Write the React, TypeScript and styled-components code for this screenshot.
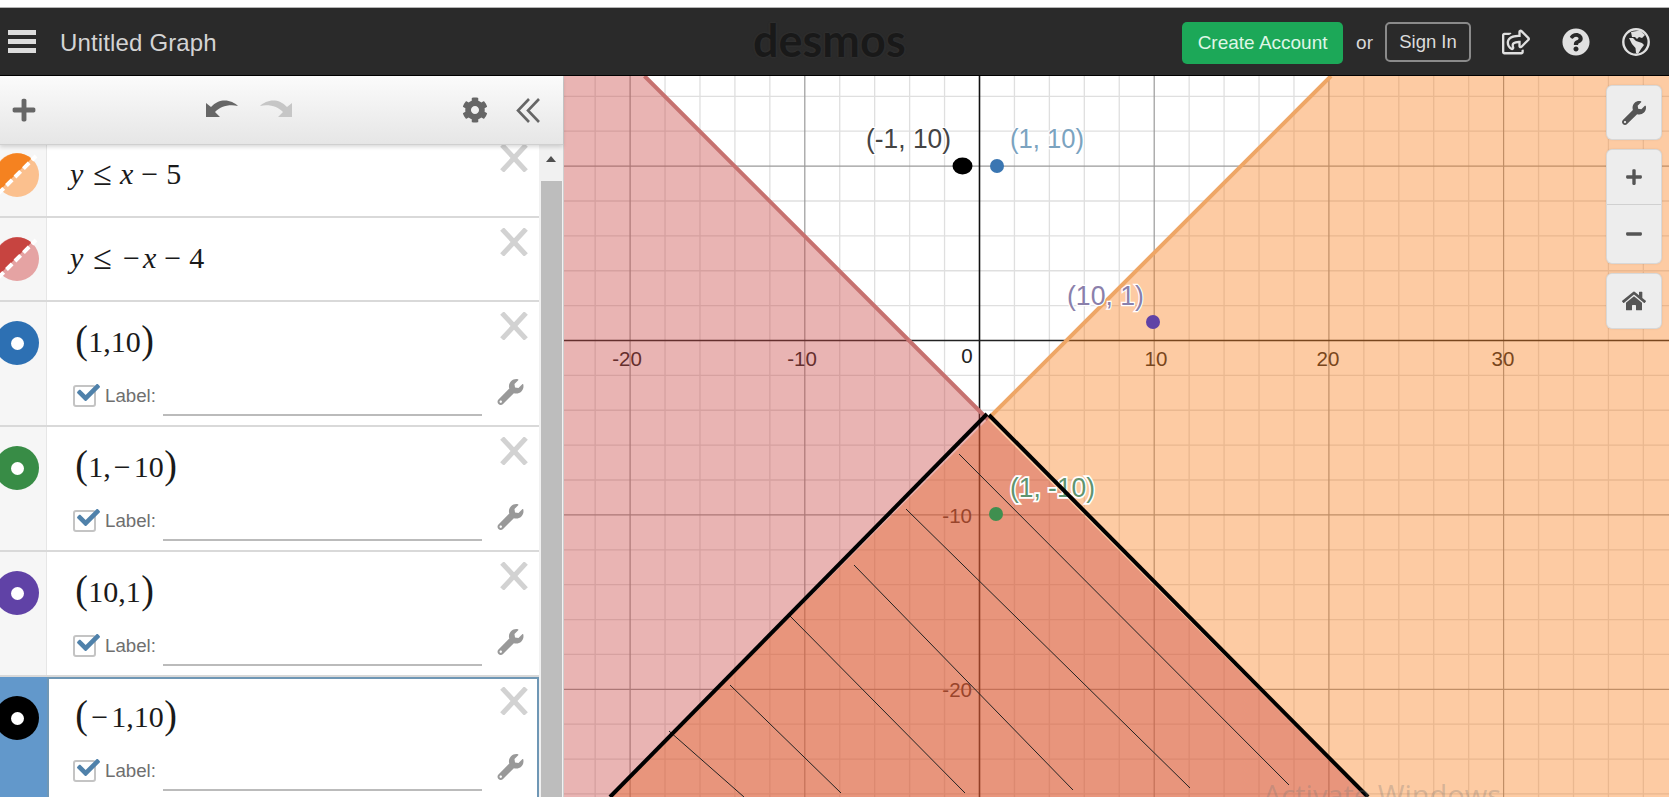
import React from 'react';
import styled, { createGlobalStyle } from 'styled-components';
import { FaWrench, FaPlus, FaMinus, FaHome, FaCog, FaCheck, FaQuestionCircle, FaRegShareSquare } from 'react-icons/fa';

const GlobalStyle = createGlobalStyle`
  html, body { margin: 0; padding: 0; height: 100%; overflow: hidden; background: #fff; }
  #root { height: 100%; }
  * { box-sizing: border-box; }
`;

const Page = styled.div`
  width: 1669px; height: 797px; display: flex; flex-direction: column; overflow: hidden;
  font-family: "Liberation Sans", Arial, sans-serif;
`;
const TopStrip = styled.div`height: 8px; flex: none; background: #fff; border-bottom: 1px solid #b4b4b4;`;
const Header = styled.header`
  height: 68px; flex: none; background: #2a2a2a; border-bottom: 1px solid #000;
  display: grid; grid-template-columns: 753px auto 1fr; align-items: center;
`;
const HeaderLeft = styled.div`display: flex; align-items: center; padding-left: 8px; gap: 25px;`;
const Burger = styled.div`display: flex; flex-direction: column; gap: 4px; width: 28px;`;
const BurgerBar = styled.span`display: block; height: 5px; background: #dcdcdc;`;
const Title = styled.div`font-size: 24px; color: #d4d4d4; letter-spacing: 0.15px; margin: 3px 0 0 -1px;`;
const Logo = styled.div`
  font-family: Lato, sans-serif; font-size: 45px; font-weight: 700; color: #191919; line-height: 1;
  width: 151px; margin-top: -3px; text-shadow: 0 0 2px #3c3c3c;
`;
const HeaderRight = styled.div`display: flex; align-items: center; justify-content: flex-end; padding-right: 19px;`;
const CreateButton = styled.div`
  width: 161px; height: 42px; border-radius: 5px; background: #1ca858; color: #dff6e6;
  font-size: 19px; display: flex; align-items: center; justify-content: center; margin-top: 2px;
`;
const Or = styled.span`font-size: 19px; color: #d8d8d8; margin: 3px 12px 0 13px;`;
const SignIn = styled.div`
  width: 86px; height: 40px; border-radius: 5px; border: 2px solid #8a8a8a; color: #dcdcdc;
  font-size: 18.5px; display: flex; align-items: center; justify-content: center; margin: 1px 31px 0 0;
`;
const HeaderIcon = styled.div<{ $gap?: number }>`
  width: 28px; height: 28px; color: #e0e0e0; margin-left: ${p => p.$gap ?? 0}px; display: flex;
  svg { width: 100%; height: 100%; }
`;

const Main = styled.div`flex: 1; display: flex; min-height: 0;`;
const Sidebar = styled.aside`width: 564px; flex: none; display: flex; flex-direction: column; border-right: 1px solid #cfcfcf; background: #fff;`;
const Toolbar = styled.div`
  height: 69px; flex: none; position: relative; z-index: 2; display: flex; align-items: center; padding-left: 11px;
  background: linear-gradient(#fbfbfb, #e6e6e6); border-bottom: 1px solid #d0d0d0; box-shadow: 0 2px 4px rgba(0,0,0,.15);
  color: #666;
`;
const PlusIcon = styled(FaPlus)`width: 26px; height: 26px;`;
const HistoryGroup = styled.div`display: flex; gap: 22px; margin-left: 169px; margin-top: -5px;`;
const HistoryIcon = styled.svg<{ $redo?: boolean }>`
  width: 32px; height: 18px; fill: ${p => (p.$redo ? '#c6c6c6' : '#666')};
  transform: ${p => (p.$redo ? 'scaleX(-1)' : 'none')};
`;
const ToolsGroup = styled.div`display: flex; align-items: center; gap: 28px; margin-left: auto; padding-right: 23px;`;
const GearIcon = styled(FaCog)`width: 26px; height: 26px;`;
const Chevrons = styled.svg`width: 24px; height: 25px; fill: none; stroke: #666; stroke-width: 2.6;`;

const ListArea = styled.div`flex: 1; display: flex; min-height: 0; overflow: hidden;`;
const List = styled.div`width: 539px; flex: none; margin-top: -11px;`;
const Row = styled.div<{ $height: number }>`
  height: ${p => p.$height}px; display: flex; overflow: hidden; border-bottom: 2px solid #d9d9d9;
`;
const Gutter = styled.div<{ $selected?: boolean }>`
  width: 47px; flex: none; padding-top: 19px; background: ${p => (p.$selected ? '#6298cb' : '#f6f6f6')};
  border-right: 1px solid ${p => (p.$selected ? '#6298cb' : '#e6e6e6')};
`;
const Ring = styled.div<{ $color: string }>`
  width: 44px; height: 44px; margin-left: -5px; border-radius: 50%; background: ${p => p.$color};
  display: flex; align-items: center; justify-content: center;
  &::after { content: ""; width: 13px; height: 13px; border-radius: 50%; background: #fff; }
`;
const HalfIcon = styled.svg`width: 44px; height: 44px; margin-left: -5px; display: block;`;
const RowBody = styled.div<{ $selected?: boolean }>`
  flex: 1; min-width: 0; padding: ${p => (p.$selected ? '8px 9px 0 24px' : '10px 11px 0 26px')};
  border: ${p => (p.$selected ? '2px solid #6f97b5' : '0')};
  border-bottom: 0; background: #fff;
`;
const ExpressionLine = styled.div<{ $height: number }>`
  height: ${p => p.$height}px; display: flex; justify-content: space-between; align-items: flex-start;
`;
const Equation = styled.div`
  font-family: "Liberation Serif", "Times New Roman", serif; font-size: 30px; line-height: 40px; color: #1a1a1a;
  display: flex; align-items: center; margin: 10px 0 0 -3px; white-space: nowrap;
`;
const Point = styled.div`
  font-family: "Liberation Serif", "Times New Roman", serif; font-size: 30px; line-height: 40px; color: #1a1a1a;
  display: flex; align-items: center; margin: 10px 0 0 2px; white-space: nowrap;
`;
const Variable = styled.i``;
const LessEqual = styled.span`font-size: 34px; margin: 0 8px 0 10px; line-height: 40px;`;
const Operator = styled.span`margin: 0 8px;`;
const UnaryMinus = styled.span`margin: 0 3px 0 3px;`;
const Paren = styled.span`font-size: 40px; font-weight: 300; line-height: 40px; margin-top: -4px; transform: scaleX(.95);`;
const CloseIcon = styled.svg`width: 28px; height: 28px; flex: none; stroke: #d2d2d2; stroke-width: 5; fill: none;`;
const LabelRow = styled.div`height: 36px; display: flex; align-items: stretch;`;
const CheckBox = styled.div`
  width: 23px; height: 22px; margin-top: 5px; border: 2px solid #c4c4c4; border-radius: 3px; position: relative; flex: none;
  svg { position: absolute; left: 0; top: -6px; width: 27px; height: 23px; color: #4f81aa; }
`;
const LabelText = styled.span`font-size: 18.7px; color: #6f6f6f; margin-left: 9px; line-height: 32px;`;
const LabelInput = styled.div`flex: none; width: 319px; margin-left: 7px; border-bottom: 2px solid #bbb;`;
const RowWrench = styled(FaWrench)`width: 27px; height: 26px; color: #999; margin: -1px 0 0 15px; flex: none;`;

const Scrollbar = styled.div`width: 24px; flex: none; background: #f1f1f1; display: flex; flex-direction: column; align-items: center;`;
const ScrollUp = styled.div`
  height: 36px; flex: none; display: flex; justify-content: center; padding-top: 11px;
  &::after { content: ""; border-left: 5px solid transparent; border-right: 5px solid transparent; border-bottom: 6px solid #505050; height: 0; }
`;
const ScrollThumb = styled.div`flex: 1; width: 21px; background: #bdbdbd;`;

const GraphArea = styled.main`flex: 1; position: relative; overflow: hidden; background: #fff;`;
const GraphSvg = styled.svg`display: block; width: 100%; height: 100%;`;
const Controls = styled.div`position: absolute; top: 10px; right: 8px; display: flex; flex-direction: column; gap: 11px;`;
const ControlGroup = styled.div`
  width: 54px; border-radius: 5px; background: #ededed; box-shadow: 0 0 0 1px #d8d8d8, 0 0 3px rgba(0,0,0,.2);
  display: flex; flex-direction: column; overflow: hidden; color: #555;
`;
const ControlButton = styled.div<{ $height: number; $divided?: boolean; $icon?: number }>`
  height: ${p => p.$height}px; display: flex; align-items: center; justify-content: center;
  border-bottom: ${p => (p.$divided ? '1px solid #d0d0d0' : '0')};
  svg { width: ${p => p.$icon ?? 24}px; height: ${p => p.$icon ?? 24}px; }
`;
const Watermark = styled.div`
  position: absolute; left: 699px; top: 699px; font-size: 29px; color: rgba(120,120,120,.3); white-space: nowrap;
  font-family: "Open Sans", sans-serif;
`;

const Close = () => (
  <CloseIcon viewBox="0 0 28 28"><path d="M2 1 L26 27 M26 1 L2 27" /></CloseIcon>
);
const DashedIcon = ({ dark, light }: { dark: string; light: string }) => (
  <HalfIcon viewBox="0 0 44 44">
    <circle cx="22" cy="22" r="22" fill={light} />
    <path d="M5.5 36.5 A22 22 0 0 1 36.5 5.5 Z" fill={dark} />
    <path d="M3 41 L41 3" stroke="#fff" strokeWidth="4" strokeDasharray="8 4" fill="none" />
  </HalfIcon>
);
const LabelControls = () => (
  <LabelRow>
    <CheckBox><FaCheck /></CheckBox>
    <LabelText>Label:</LabelText>
    <LabelInput />
    <RowWrench />
  </LabelRow>
);
const PointRow = ({ color, selected, children }: { color: string; selected?: boolean; children: React.ReactNode }) => (
  <Row $height={125}>
    <Gutter $selected={selected}><Ring $color={color} /></Gutter>
    <RowBody $selected={selected}>
      <ExpressionLine $height={68}>
        <Point><Paren>(</Paren>{children}<Paren>)</Paren></Point>
        <Close />
      </ExpressionLine>
      <LabelControls />
    </RowBody>
  </Row>
);

const OX = 979.5, OY = 340.5, SX = 17.47, SY = 17.44;
const X0 = 564, Y0 = 76, X1 = 1669, Y1 = 797;
const range = (a: number, b: number, s: number) => { const r: number[] = []; for (let i = a; i <= b; i += s) r.push(i); return r; };
const xs = range(-22, 40, 2), ys = range(-26, 14, 2);
const hatches = [
  [959, 454, 1289, 785], [906, 509, 1190, 788], [854, 565, 1073, 790],
  [790, 616, 965, 793], [730, 685, 841, 793], [669, 731, 744, 797],
];
const pointLabelStyle = { fontFamily: '"Liberation Sans", Arial, sans-serif', fontSize: 28, paintOrder: 'stroke' as const, stroke: '#fff', strokeWidth: 2.5, lengthAdjust: 'spacingAndGlyphs' as const };
const axisStyle = { fontFamily: '"Liberation Sans", Arial, sans-serif', fontSize: 20.5, fill: '#222' };

const Graph = () => (
  <GraphSvg viewBox={`${X0} ${Y0} ${X1 - X0} ${Y1 - Y0}`}>
    {xs.filter(v => v % 10 !== 0).map(v => <line key={'vm' + v} x1={OX + v * SX} x2={OX + v * SX} y1={Y0} y2={Y1} stroke="#dfdfdf" strokeWidth="1.3" />)}
    {ys.filter(v => v % 10 !== 0).map(v => <line key={'hm' + v} y1={OY - v * SY} y2={OY - v * SY} x1={X0} x2={X1} stroke="#dfdfdf" strokeWidth="1.3" />)}
    {xs.filter(v => v % 10 === 0 && v !== 0).map(v => <line key={'vM' + v} x1={OX + v * SX} x2={OX + v * SX} y1={Y0} y2={Y1} stroke="#9a9a9a" strokeWidth="1.2" />)}
    {ys.filter(v => v % 10 === 0 && v !== 0).map(v => <line key={'hM' + v} y1={OY - v * SY} y2={OY - v * SY} x1={X0} x2={X1} stroke="#9a9a9a" strokeWidth="1.2" />)}
    <line x1={OX} x2={OX} y1={Y0} y2={Y1} stroke="#111" strokeWidth="1.6" />
    <line y1={OY} y2={OY} x1={X0} x2={X1} stroke="#222" strokeWidth="1.6" />
    <text x={627} y={366} textAnchor="middle" {...axisStyle}>-20</text>
    <text x={802} y={366} textAnchor="middle" {...axisStyle}>-10</text>
    <text x={967} y={363} textAnchor="middle" {...axisStyle}>0</text>
    <text x={1156} y={366} textAnchor="middle" {...axisStyle}>10</text>
    <text x={1328} y={366} textAnchor="middle" {...axisStyle}>20</text>
    <text x={1503} y={366} textAnchor="middle" {...axisStyle}>30</text>
    <text x={972} y={523} textAnchor="end" {...axisStyle}>-10</text>
    <text x={972} y={697} textAnchor="end" {...axisStyle}>-20</text>
    <polygon points="1331,76 1669,76 1669,797 610,797" fill="#fa7e19" fillOpacity=".4" />
    <polygon points="644.5,76 1365.5,797 564,797 564,76" fill="#c74440" fillOpacity=".4" />
    <line x1="1331" y1="76" x2="988" y2="419" stroke="#eea666" strokeWidth="4" />
    <line x1="644.5" y1="76" x2="988" y2="419.5" stroke="#c6716f" strokeWidth="4" />
    <circle cx="997" cy="166" r="7" fill="#3a76b2" />
    <circle cx="996" cy="514" r="7" fill="#3f8f4f" />
    <circle cx="1153" cy="322" r="7" fill="#6042a6" />
    <ellipse cx="962.5" cy="166" rx="10" ry="8.5" fill="#000" />
    <text x={866} y={148} textLength={85} fill="#444" {...pointLabelStyle}>(-1, 10)</text>
    <text x={1010} y={148} textLength={74} fill="#7ba3bf" {...pointLabelStyle}>(1, 10)</text>
    <text x={1067} y={305} textLength={77} fill="#8a80ab" {...pointLabelStyle}>(10, 1)</text>
    <text x={1010} y={497} textLength={85} fill="#5f9470" {...pointLabelStyle} strokeWidth={3.5}>(1, -10)</text>
    {hatches.map(h => <line key={h[0]} x1={h[0]} y1={h[1]} x2={h[2]} y2={h[3]} stroke="#222" strokeWidth="1" />)}
    <line x1="987" y1="414" x2="610" y2="797" stroke="#000" strokeWidth="4" />
    <line x1="989" y1="415" x2="1368" y2="797" stroke="#000" strokeWidth="4" />
  </GraphSvg>
);

export default function App() {
  return (
    <Page>
      <GlobalStyle />
      <TopStrip />
      <Header>
        <HeaderLeft>
          <Burger><BurgerBar /><BurgerBar /><BurgerBar /></Burger>
          <Title>Untitled Graph</Title>
        </HeaderLeft>
        <Logo>desmos</Logo>
        <HeaderRight>
          <CreateButton>Create Account</CreateButton>
          <Or>or</Or>
          <SignIn>Sign In</SignIn>
          <HeaderIcon><FaRegShareSquare /></HeaderIcon>
          <HeaderIcon $gap={32}><FaQuestionCircle /></HeaderIcon>
          <HeaderIcon $gap={32}>
            <svg viewBox="0 0 28 28">
              <circle cx="14" cy="14" r="12.7" fill="none" stroke="#e0e0e0" strokeWidth="2.4" />
              <path d="M9 4 L18 2.5 L23 7 L20 10 L17 9 L15 11 L13 9 L10 9 Z M7 10 L11 10 L14 13 L20 15 L22 17 L19 21 L16 26 L14 25 L13.5 20 L10 16 Z" fill="#e0e0e0" />
            </svg>
          </HeaderIcon>
        </HeaderRight>
      </Header>
      <Main>
        <Sidebar>
          <Toolbar>
            <PlusIcon />
            <HistoryGroup>
              <HistoryIcon viewBox="0 0 32 18"><path d="M0 4 L0 18 L14 18 L9 13 C14 8 22 5 32 7 C26 1 14 -2 5 8 Z" /></HistoryIcon>
              <HistoryIcon $redo viewBox="0 0 32 18"><path d="M0 4 L0 18 L14 18 L9 13 C14 8 22 5 32 7 C26 1 14 -2 5 8 Z" /></HistoryIcon>
            </HistoryGroup>
            <ToolsGroup>
              <GearIcon />
              <Chevrons viewBox="0 0 24 25"><path d="M13 1 L2 12.5 L13 24 M23 1 L12 12.5 L23 24" /></Chevrons>
            </ToolsGroup>
          </Toolbar>
          <ListArea>
            <List>
              <Row $height={84}>
                <Gutter><DashedIcon dark="#f58220" light="#fbc08e" /></Gutter>
                <RowBody>
                  <ExpressionLine $height={60}>
                    <Equation><Variable>y</Variable><LessEqual>≤</LessEqual><Variable>x</Variable><Operator>−</Operator>5</Equation>
                    <Close />
                  </ExpressionLine>
                </RowBody>
              </Row>
              <Row $height={84}>
                <Gutter><DashedIcon dark="#c74440" light="#e5a3a3" /></Gutter>
                <RowBody>
                  <ExpressionLine $height={60}>
                    <Equation><Variable>y</Variable><LessEqual>≤</LessEqual><UnaryMinus>−</UnaryMinus><Variable>x</Variable><Operator>−</Operator>4</Equation>
                    <Close />
                  </ExpressionLine>
                </RowBody>
              </Row>
              <PointRow color="#2d70b3">1,10</PointRow>
              <PointRow color="#388c46">1,<UnaryMinus>−</UnaryMinus>10</PointRow>
              <PointRow color="#6042a6">10,1</PointRow>
              <PointRow color="#000" selected><UnaryMinus>−</UnaryMinus>1,10</PointRow>
            </List>
            <Scrollbar>
              <ScrollUp />
              <ScrollThumb />
            </Scrollbar>
          </ListArea>
        </Sidebar>
        <GraphArea>
          <Graph />
          <Controls>
            <ControlGroup><ControlButton $height={53}><FaWrench /></ControlButton></ControlGroup>
            <ControlGroup>
              <ControlButton $height={55} $divided $icon={18}><FaPlus /></ControlButton>
              <ControlButton $height={58} $icon={18}><FaMinus /></ControlButton>
            </ControlGroup>
            <ControlGroup><ControlButton $height={54}><FaHome /></ControlButton></ControlGroup>
          </Controls>
          <Watermark>Activate Windows</Watermark>
        </GraphArea>
      </Main>
    </Page>
  );
}
